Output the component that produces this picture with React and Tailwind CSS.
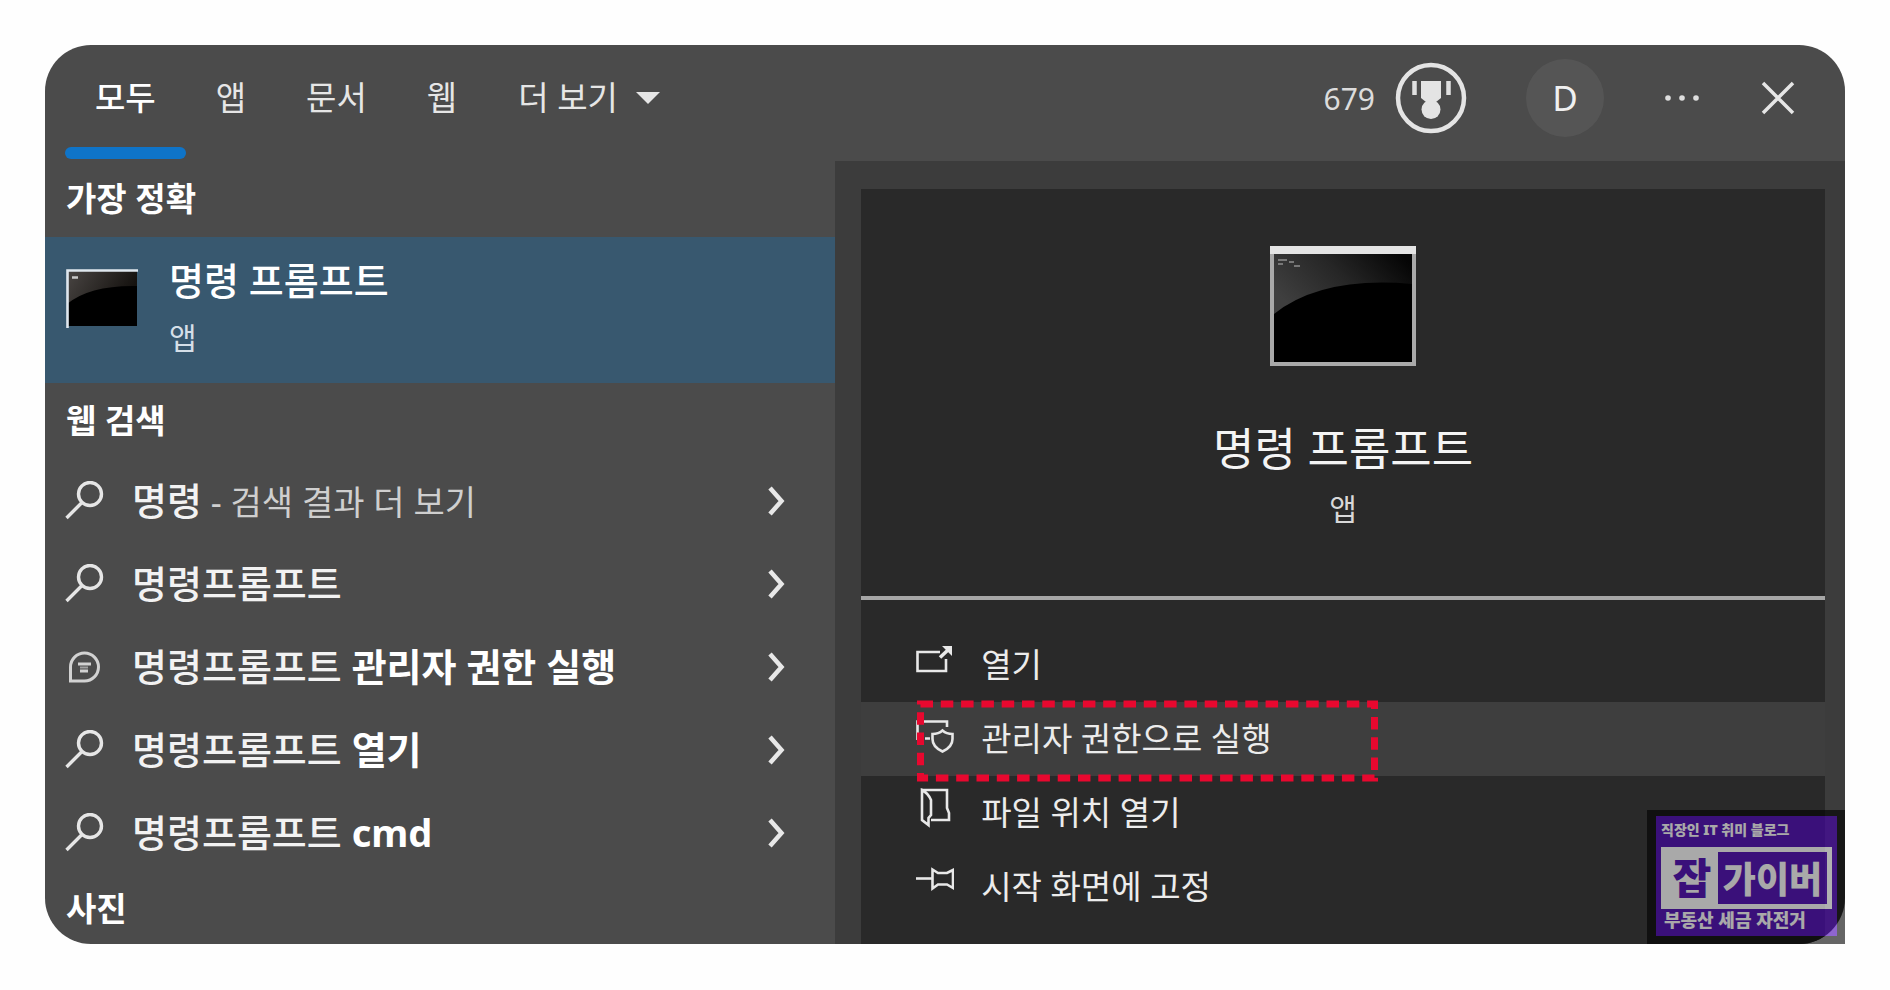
import React from "react";

const tabs = ["모두", "앱", "문서", "웹"];

const suggestions = [
  { icon: "search", parts: [["명령", "strong"], [" - 검색 결과 더 보기", "hint"]] },
  { icon: "search", parts: [["명령프롬프트", "normal"]] },
  { icon: "chat", parts: [["명령프롬프트 ", "normal"], ["관리자 권한 실행", "bold"]] },
  { icon: "search", parts: [["명령프롬프트 ", "normal"], ["열기", "bold"]] },
  { icon: "search", parts: [["명령프롬프트 ", "normal"], ["cmd", "bold"]] },
];

const partStyles = {
  strong: "text-[38px] font-medium text-[#f2f2f2]",
  normal: "text-[38px] font-medium text-[#f2f2f2]",
  bold: "text-[38px] font-bold text-white",
  hint: "text-[34px] text-[#cfcfcf]",
};

function SearchIcon() {
  return (
    <svg className="h-[40px] w-[40px] shrink-0" viewBox="0 0 40 40" fill="none" stroke="#e6e6e6" strokeWidth="3.4" aria-hidden="true">
      <circle cx="25" cy="13" r="11.5" />
      <path d="M17 21.5 1.5 37" />
    </svg>
  );
}

function ChatIcon() {
  return (
    <svg className="h-[40px] w-[40px] shrink-0" viewBox="0 0 40 40" fill="none" stroke="#d2d2d2" strokeWidth="3" aria-hidden="true">
      <path d="M5.5 34V20A14 14 0 1 1 19.5 34Z" />
      <path d="M13 17h13M15 24h8" strokeWidth="3" />
      <path d="M15 20.5h8" strokeWidth="2" stroke="#a0a0a0" />
    </svg>
  );
}

function Chevron() {
  return (
    <svg className="h-[32px] w-[20px]" viewBox="0 0 20 32" fill="none" stroke="#e8e8e8" strokeWidth="4.5" aria-hidden="true">
      <path d="M3 3 14.500 16 3 29" />
    </svg>
  );
}

function ConsoleSmall() {
  return (
    <svg className="h-[60px] w-[73px] shrink-0" viewBox="0 0 73 60" aria-hidden="true">
      <defs>
        <linearGradient id="smallGlass" x1="0" y1="0" x2="1" y2="0.3">
          <stop offset="0" stopColor="#4a4644" />
          <stop offset="1" stopColor="#15120f" />
        </linearGradient>
      </defs>
      <rect x="1" y="1" width="70" height="56" fill="#000" />
      <path d="M1 1H71V17Q24 16 1 35Z" fill="url(#smallGlass)" />
      <path d="M1.500 59V1.500H72" fill="none" stroke="#dfe7ee" strokeWidth="2.600" />
      <path d="M6 8.500h6" stroke="#c8c8c8" strokeWidth="2.500" />
    </svg>
  );
}

function ConsoleLarge() {
  return (
    <svg className="h-[120px] w-[146px]" viewBox="0 0 146 120" aria-hidden="true">
      <defs>
        <linearGradient id="largeGlass" x1="0" y1="0.6" x2="1" y2="0.2">
          <stop offset="0" stopColor="#3f3f3f" />
          <stop offset="0.5" stopColor="#262626" />
          <stop offset="1" stopColor="#050505" />
        </linearGradient>
      </defs>
      <rect x="2" y="2" width="142" height="116" fill="#000" stroke="#a9a9a9" strokeWidth="4" />
      <path d="M4 8H142V38Q52 30 4 68Z" fill="url(#largeGlass)" />
      <rect width="146" height="8" fill="#e4e4e4" />
      <path d="M8 14h9M8 18h5M19 16h5M24 20h6" stroke="#777" strokeWidth="2" />
    </svg>
  );
}

function MedalIcon() {
  return (
    <svg className="h-[72px] w-[72px]" viewBox="0 0 72 72" aria-hidden="true">
      <circle cx="36" cy="36" r="33" fill="none" stroke="#e4e4e4" strokeWidth="4.5" />
      <path d="M26 19H46V36L41 40H31L26 36Z" fill="#e4e4e4" />
      <path d="M19.500 19v14M53.500 19v14" stroke="#e0e0e0" strokeWidth="4.5" />
      <circle cx="36" cy="47.5" r="9.5" fill="#e4e4e4" />
    </svg>
  );
}

const actionIcons = {
  open: (
    <>
      <path d="M24 12H1.500V31H30V19" />
      <path d="M24 17.500 32 10" strokeWidth="3.5" />
      <path d="M26 6H36V16Z" fill="#e8e8e8" stroke="none" />
    </>
  ),
  admin: (
    <>
      <path d="M1.500 26V7.500H31V13M9 24.500h5" />
      <path d="M26.500 16.500Q30.500 20 36.500 20V25Q36.500 33 26.500 37.500Q16.500 33 16.500 25V20Q22.500 20 26.500 16.500Z" />
    </>
  ),
  folder: (
    <>
      <path d="M6 2H31V20L33 25V32H15" />
      <path d="M6 2V32L12.500 37V30L15 27V12Q12 5 6 2Z" />
    </>
  ),
  pin: (
    <>
      <path d="M0 16.500H16" />
      <path d="M16.500 7.500 22 11H31L37 8V26L31 22.500H22L16.500 26.500Z" />
    </>
  ),
};

const actions = [
  { icon: "open", label: "열기" },
  { icon: "admin", label: "관리자 권한으로 실행", active: true },
  { icon: "folder", label: "파일 위치 열기" },
  { icon: "pin", label: "시작 화면에 고정" },
];

function Header() {
  return (
    <header className="flex h-[116px] shrink-0 items-stretch justify-between bg-[#4b4b4b] pl-[20px]">
      <nav className="flex text-[33px] text-[#e6e6e6]">
        {tabs.map((tab, i) => (
          <button key={tab} type="button" className="flex flex-col">
            <span className={i === 0 ? "flex flex-1 items-center px-[30px] pt-[4px] font-medium text-white" : "flex flex-1 items-center px-[30px] pt-[4px]"}>{tab}</span>
            <span className={i === 0 ? "mb-[2px] h-[12px] w-full rounded-full bg-[#0f74c8]" : "mb-[2px] h-[12px]"} />
          </button>
        ))}
        <button type="button" className="flex items-center gap-[18px] px-[31px] pb-[10px]">
          더 보기
          <svg className="h-[12px] w-[24px]" viewBox="0 0 24 12" fill="#e6e6e6" aria-hidden="true">
            <path d="M0 0H24L12 12Z" />
          </svg>
        </button>
      </nav>
      <div className="flex items-center pr-[49px] pb-[10px]">
        <span className="pr-[20px] text-[30px] text-[#dcdcdc]">679</span>
        <button type="button" aria-label="Rewards">
          <MedalIcon />
        </button>
        <button type="button" className="ml-[59px] flex h-[78px] w-[78px] items-center justify-center rounded-full bg-[#555555] text-[35px] text-[#f0f0f0]">
          D
        </button>
        <button type="button" aria-label="Options" className="ml-[58px]">
          <svg className="h-[36px] w-[40px]" viewBox="0 0 40 36" fill="#dedede" aria-hidden="true">
            <circle cx="6" cy="18" r="2.800" />
            <circle cx="20" cy="18" r="2.800" />
            <circle cx="34" cy="18" r="2.800" />
          </svg>
        </button>
        <button type="button" aria-label="Close" className="ml-[58px]">
          <svg className="h-[36px] w-[36px]" viewBox="0 0 36 36" fill="none" stroke="#e6e6e6" strokeWidth="3.500" aria-hidden="true">
            <path d="M3 3 33 33M33 3 3 33" />
          </svg>
        </button>
      </div>
    </header>
  );
}

function Results() {
  return (
    <section className="flex w-[43.9%] flex-col bg-[#4b4b4b]">
      <h2 className="flex h-[76px] items-center pl-[21px] text-[33px] font-bold text-white">가장 정확</h2>
      <button type="button" className="flex h-[146px] items-start gap-[30px] bg-[#38586f] pt-[14px] pl-[21px] text-left">
        <span className="pt-[18px]">
          <ConsoleSmall />
        </span>
        <span className="flex flex-col">
          <span className="text-[38px] leading-[58px] font-medium text-white">명령 프롬프트</span>
          <span className="text-[30px] leading-[58px] text-[#d5dfe8]">앱</span>
        </span>
      </button>
      <h2 className="flex h-[76px] items-center pl-[21px] text-[33px] font-bold text-white">웹 검색</h2>
      <ul>
        {suggestions.map((item, i) => (
          <li key={i}>
            <button type="button" className="flex h-[83px] w-full items-center pr-[48px] pl-[20px] text-left">
              {item.icon === "search" ? <SearchIcon /> : <ChatIcon />}
              <span className="flex-1 pl-[27px] whitespace-pre">
                {item.parts.map(([text, kind]) => (
                  <span key={text} className={partStyles[kind]}>{text}</span>
                ))}
              </span>
              <Chevron />
            </button>
          </li>
        ))}
      </ul>
      <h2 className="flex flex-1 items-center pl-[21px] text-[33px] font-bold text-white">사진</h2>
    </section>
  );
}

function Details() {
  return (
    <section className="flex flex-1 flex-col bg-[#3c3c3c] pt-[28px] pr-[20px] pl-[26px]">
      <div className="flex flex-1 flex-col bg-[#292929]">
        <div className="flex h-[411px] flex-col items-center border-b-[4px] border-[#a6a6a6] pt-[57px]">
          <ConsoleLarge />
          <h1 className="mt-[50px] text-[45px] leading-[66px] text-[#f4f4f4]">명령 프롬프트</h1>
          <p className="mt-[5px] text-[30px] leading-[44px] text-[#d8d8d8]">앱</p>
        </div>
        <ul className="pt-[28px]">
          {actions.map((action) => (
            <li key={action.icon} className={action.active ? "relative bg-[#3e3e3e]" : ""}>
              <button type="button" className="flex h-[74px] w-full items-center gap-[27px] pl-[55px] text-left text-[33px] text-[#ececec]">
                <svg className="h-[50px] w-[38px]" viewBox="0 0 38 50" fill="none" stroke="#e8e8e8" strokeWidth="2.600" aria-hidden="true">
                  {actionIcons[action.icon]}
                </svg>
                {action.label}
              </button>
              {action.active && (
                <svg className="pointer-events-none absolute -top-[2px] left-[56px] h-[82px] w-[461px]" viewBox="0 0 461 82" fill="none" stroke="#e8082f" strokeWidth="7" aria-hidden="true">
                  <path d="M3.500 4H457.500V78H3.500Z" strokeDasharray="12.500 7.800" />
                </svg>
              )}
            </li>
          ))}
        </ul>
      </div>
    </section>
  );
}

function Watermark() {
  return (
    <aside className="absolute right-0 bottom-0 flex h-[134px] w-[198px] flex-col bg-black pt-[6px] pr-[8px] pb-[8px] pl-[9px] font-black whitespace-nowrap text-white opacity-60">
      <div className="flex flex-1 flex-col bg-[#4600b0] px-[5px]">
        <p className="h-[31px] text-[14px] leading-[28px]">직장인 IT 취미 블로그</p>
        <div className="flex h-[62px] border-[5px] border-white">
          <span className="flex w-[52px] shrink-0 items-center justify-center bg-white text-[42px] leading-none text-[#4600b0]">잡</span>
          <span className="flex flex-1 items-center justify-center pt-[4px] text-[36px] leading-none">가이버</span>
        </div>
        <p className="pl-[3px] text-[18px] leading-[22px]">부동산 세금 자전거</p>
      </div>
    </aside>
  );
}

export default function App() {
  return (
    <main className="flex min-h-screen flex-col bg-[#fefefe] px-[45px] pt-[45px] pb-[46px] font-['Noto_Sans','Noto_Sans_CJK_KR',sans-serif]">
      <div className="relative flex flex-1 flex-col">
        <div className="flex flex-1 flex-col overflow-hidden rounded-[46px]">
          <Header />
          <div className="flex flex-1">
            <Results />
            <Details />
          </div>
        </div>
        <Watermark />
      </div>
    </main>
  );
}
